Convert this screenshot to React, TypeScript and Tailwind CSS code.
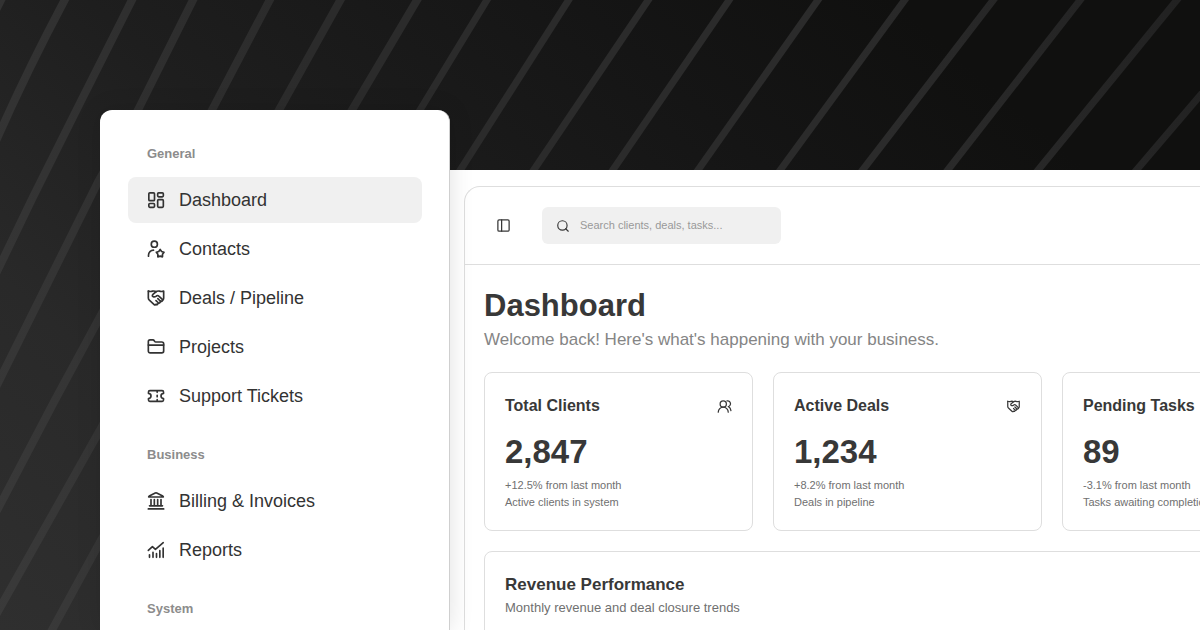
import type { ReactNode } from 'react';
import { PanelLeft, Search } from 'lucide-react';

type IconProps = { className?: string };

function Icon({ className, children }: IconProps & { children: ReactNode }) {
  return (
    <svg
      viewBox="0 0 24 24"
      fill="none"
      stroke="currentColor"
      strokeWidth={2}
      strokeLinecap="round"
      strokeLinejoin="round"
      aria-hidden="true"
      className={className}
    >
      {children}
    </svg>
  );
}

function DashboardIcon({ className }: IconProps) {
  return (
    <Icon className={className}>
      <rect x="3.4" y="3.4" width="6.8" height="9.4" rx="1.2" />
      <rect x="14" y="3.4" width="6.8" height="4.8" rx="1.2" />
      <rect x="3.4" y="16.2" width="6.8" height="4.6" rx="1.2" />
      <rect x="14" y="11.6" width="6.8" height="9.2" rx="1.2" />
    </Icon>
  );
}

function ContactsIcon({ className }: IconProps) {
  return (
    <Icon className={className}>
      <circle cx="10" cy="6.2" r="3.7" />
      <path d="M3 20.6v-1.2a6 6 0 0 1 6-6" />
      <path d="M17 12.6l1.7 2.4 2.9.9-1.8 2.5v3L17 20.6l-2.800.8v-3l-1.800-2.500 2.900-.9z" />
    </Icon>
  );
}

function DealsIcon({ className }: IconProps) {
  return (
    <Icon className={className}>
      <path d="M2.8 3.6c1.700.7 3.500.7 5.100.2 1.500-.4 2.900-.2 4.100.7 1.200-.9 2.600-1.100 4.100-.7 1.600.5 3.400.5 5.100-.2v8.600c0 1.300-.5 2-1.600 2.600" />
      <path d="M2.8 3.600v8.400c0 1.400.5 2.100 1.500 2.900l5.200 4.700c.8.800 1.900.8 2.700.1" />
      <path d="M12 4.500L8.300 7.700c-1 .9-.9 2 .1 2.600 1.200.7 2.500.5 3.600-.3l1-.7c.8-.5 1.700-.3 2.400.4l3.900 3.700c.8.800.8 1.700 0 2.300s-1.600.5-2.400-.2" />
      <path d="M14.200 12.700l2.600 2.600c.7.800.6 1.700-.1 2.300s-1.600.5-2.300-.2l-2.400-2.200M14.200 17.200c.6.800.4 1.700-.3 2.300-.6.500-1.300.5-1.900.2" />
    </Icon>
  );
}

function FolderIcon({ className }: IconProps) {
  return (
    <Icon className={className}>
      <path d="M2.800 9.700V5.500c0-1.300.8-2 2-2h3.400c.8 0 1.300.3 1.700 1l.5.800c.3.500.7.700 1.300.700h7.300c1.300 0 2.200.8 2.200 2v8.800c0 1.400-.8 2.200-2.200 2.200H5c-1.400 0-2.200-.8-2.200-2.200z" />
      <path d="M2.800 9.700h18.400" />
    </Icon>
  );
}

function TicketIcon({ className }: IconProps) {
  return (
    <Icon className={className}>
      <path d="M3 8.900V7.200c0-1 .6-1.600 1.600-1.600h14.800c1 0 1.600.6 1.600 1.600v1.700c-1.900.3-3 1.500-3 3.100s1.100 2.800 3 3.100v1.700c0 1-.6 1.600-1.600 1.600H4.600c-1 0-1.600-.6-1.600-1.600v-1.700c1.900-.3 3-1.500 3-3.100S4.900 9.200 3 8.900z" />
      <path d="M13.400 6v1.600M13.400 11.200v1.600M13.400 16.400V18" />
    </Icon>
  );
}

function BankIcon({ className }: IconProps) {
  return (
    <Icon className={className}>
      <path d="M3.200 7.200c0-.6.2-.9.700-1.100l7.200-3.600c.6-.3 1.200-.3 1.800 0l7.200 3.600c.5.200.7.500.7 1.100z" />
      <path d="M6 10.200v7M10 10.200v7M14 10.200v7M18 10.200v7" />
      <path d="M4.200 17.800h15.600M2.800 21.500h18.400" />
    </Icon>
  );
}

function ReportsIcon({ className }: IconProps) {
  return (
    <Icon className={className}>
      <path d="M2.800 12.500l4.900-4.500 3.600 3.200 9.400-8" />
      <path d="M4.200 20.800v-3M8.400 20.800v-6M12.600 20.800v-4.500M16.600 20.800v-8M20.600 20.800v-11" />
    </Icon>
  );
}

function ClientsIcon({ className }: IconProps) {
  return (
    <Icon className={className}>
      <circle cx="10" cy="8" r="5" />
      <path d="M2 21a8 8 0 0 1 16 0" />
      <path d="M16 3a4.600 4.600 0 0 1 2 9c2.400 1.300 4 3.700 4.300 6.500" />
    </Icon>
  );
}

const sections = [
  {
    title: 'General',
    items: [
      { label: 'Dashboard', icon: DashboardIcon, active: true },
      { label: 'Contacts', icon: ContactsIcon },
      { label: 'Deals / Pipeline', icon: DealsIcon },
      { label: 'Projects', icon: FolderIcon },
      { label: 'Support Tickets', icon: TicketIcon },
    ],
  },
  {
    title: 'Business',
    items: [
      { label: 'Billing & Invoices', icon: BankIcon },
      { label: 'Reports', icon: ReportsIcon },
    ],
  },
  { title: 'System', items: [] },
];

const stats = [
  { title: 'Total Clients', value: '2,847', change: '+12.5% from last month', note: 'Active clients in system', icon: ClientsIcon },
  { title: 'Active Deals', value: '1,234', change: '+8.2% from last month', note: 'Deals in pipeline', icon: DealsIcon },
  { title: 'Pending Tasks', value: '89', change: '-3.1% from last month', note: 'Tasks awaiting completion', icon: null },
];

function Backdrop() {
  return (
    <svg
      viewBox="0 0 1200 630"
      preserveAspectRatio="xMinYMin slice"
      aria-hidden="true"
      className="absolute inset-0 w-full h-full"
    >
      <defs>
        <linearGradient id="base" gradientUnits="userSpaceOnUse" x1="0" y1="630" x2="700" y2="-170">
          <stop offset="0" stopColor="#2f2f2f" />
          <stop offset="0.25" stopColor="#292929" />
          <stop offset="0.5" stopColor="#1e1e1e" />
          <stop offset="0.8" stopColor="#151515" />
          <stop offset="1" stopColor="#10100f" />
        </linearGradient>
        <linearGradient id="line" gradientUnits="userSpaceOnUse" x1="0" y1="630" x2="1200" y2="0">
          <stop offset="0" stopColor="#3a3a3a" />
          <stop offset="0.4" stopColor="#2b2b2b" />
          <stop offset="0.75" stopColor="#2b2b2b" />
          <stop offset="1" stopColor="#212121" />
        </linearGradient>
      </defs>
      <rect width="1200" height="630" fill="url(#base)" />
      <g fill="none" stroke="url(#line)" strokeWidth="8">
        <path d="M6-10L-6 14" />
        <path d="M70-10Q26 72-8 150" />
        <path d="M137-10L80 103L33 197L-8 282" />
        <path d="M198-10L138 110L98 182L-8 395" />
        <path d="M275-10L212 110L55 400L-8 520" />
        <path d="M346-10L279 110L100 430L-8 622" />
        <path d="M423-10L352 110L100 542L46 641" />
      </g>
      <g fill="none" stroke="url(#line)" strokeWidth="7">
        <path d="M493-10L420 110L400 143" />
        <path d="M575-10L454 180" />
        <path d="M655-10L527 180" />
        <path d="M736-10L606 180" />
        <path d="M825-10L691 180" />
        <path d="M912-10L773 180" />
        <path d="M1001-10L855 180" />
        <path d="M1088-10L940 180" />
        <path d="M1185-10L1030 180" />
        <path d="M1210 84L1128 180" />
      </g>
    </svg>
  );
}

function Sidebar() {
  return (
    <aside className="relative z-10 ml-[100px] mt-[110px] w-[350px] shrink-0 rounded-t-xl border-r border-[#cfcfcf] bg-white pr-[27px] pl-7 pt-[34px] shadow-[0_0_24px_rgba(0,0,0,0.12)]">
      <nav>
        {sections.map((section) => (
          <div key={section.title} className="mb-[26px]">
            <h2 className="mb-[13px] pl-[19px] text-[13px] leading-5 font-bold text-[#8c8c8c]">{section.title}</h2>
            <div className="flex flex-col gap-[3px]">
              {section.items.map(({ label, icon: ItemIcon, active }) => (
                <a
                  key={label}
                  href="#"
                  className={`flex h-[46px] items-center gap-[13px] rounded-lg px-[18px] text-[18px] text-[#333] ${active ? 'bg-[#f0f0f0]' : ''}`}
                >
                  <ItemIcon className="size-5 shrink-0" />
                  {label}
                </a>
              ))}
            </div>
          </div>
        ))}
      </nav>
    </aside>
  );
}

export default function App() {
  return (
    <div className="relative flex h-screen overflow-hidden bg-[#1a1a1a] font-['Liberation_Sans',Arial,sans-serif] text-[#383838]">
      <Backdrop />
      <Sidebar />

      <main className="relative mt-[170px] min-w-0 flex-1 bg-white pt-4 pl-[14px]">
        <div className="h-full rounded-tl-2xl border-t border-l border-[#dedede]">
          <header className="flex h-[78px] items-center gap-[31px] border-b border-[#dedede] pl-[30px]">
            <button type="button" aria-label="Toggle sidebar" className="flex size-4 items-center justify-center">
              <PanelLeft className="size-[15px]" strokeWidth={2} />
            </button>
            <label className="flex h-[37px] w-[239px] items-center gap-[10px] rounded-md bg-[#f0f0f0] px-[14px]">
              <Search className="size-[14px] shrink-0" strokeWidth={2} />
              <input
                type="search"
                aria-label="Search"
                placeholder="Search clients, deals, tasks..."
                className="min-w-0 flex-1 bg-transparent text-[11px] outline-none placeholder:text-[#999]"
              />
            </label>
          </header>

          <div className="px-[19px] pt-[21px]">
            <h1 className="text-[31px] leading-10 font-bold">Dashboard</h1>
            <p className="mt-[2px] text-[17px] leading-6 whitespace-nowrap text-[#858585]">
              Welcome back! Here's what's happening with your business.
            </p>

            <div className="mt-5 grid w-max grid-cols-[269px_269px_269px] gap-5">
              {stats.map(({ title, value, change, note, icon: StatIcon }) => (
                <section key={title} className="rounded-lg border border-[#dedede] px-5 pt-[21px] pb-[19px]">
                  <div className="flex items-center justify-between">
                    <h3 className="text-[16px] leading-6 font-bold">{title}</h3>
                    {StatIcon && <StatIcon className="size-[15px]" />}
                  </div>
                  <div className="mt-[14px] text-[33px] leading-10 font-bold">{value}</div>
                  <div className="mt-[5px] text-[11px] leading-[17px] text-[#707070]">
                    <p>{change}</p>
                    <p>{note}</p>
                  </div>
                </section>
              ))}

              <section className="col-span-3 h-80 rounded-lg border border-[#dedede] px-5 pt-[21px]">
                <h3 className="text-[17px] leading-6 font-bold">Revenue Performance</h3>
                <p className="mt-px text-[13px] leading-5 text-[#707070]">Monthly revenue and deal closure trends</p>
              </section>
            </div>
          </div>
        </div>
      </main>
    </div>
  );
}
